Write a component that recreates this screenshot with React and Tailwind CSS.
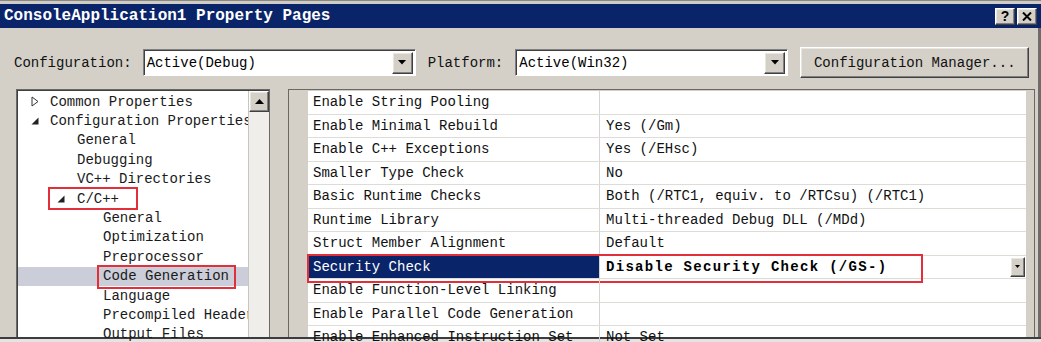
import React from "react";

const raised =
  "bg-[#d4d0c8] border border-t-white border-l-white border-r-[#404040] border-b-[#404040] shadow-[inset_-1px_-1px_0_#808080,inset_1px_1px_0_#e8e6e0] flex items-center justify-center";

function Down() {
  return (
    <svg width="8" height="5" viewBox="0 0 8 5">
      <polygon points="0,0 8,0 4,4.5" fill="#000" />
    </svg>
  );
}

function Combo({ text }) {
  return (
    <div className="h-[27px] w-[273px] bg-white border border-t-[#808080] border-l-[#808080] border-r-white border-b-white shadow-[inset_1px_1px_0_#404040] flex items-center pl-[3px] pr-[2px]">
      <span className="flex-1 text-[14px] leading-none text-black whitespace-pre">{text}</span>
      <div className={`${raised} w-[21px] h-[22px]`}>
        <Down />
      </div>
    </div>
  );
}

function TriOpen() {
  return (
    <svg width="8" height="11" viewBox="0 0 8 11">
      <polygon points="1,1 7,5.5 1,10" fill="none" stroke="#333" strokeWidth="1" />
    </svg>
  );
}

function TriExp() {
  return (
    <svg width="8" height="8" viewBox="0 0 8 8">
      <polygon points="7.5,0.5 7.5,7.5 0.5,7.5" fill="#222" />
    </svg>
  );
}

const tree = [
  { t: "Common Properties", kind: "col" },
  { t: "Configuration Properties", kind: "exp0" },
  { t: "General", kind: "l1" },
  { t: "Debugging", kind: "l1" },
  { t: "VC++ Directories", kind: "l1" },
  { t: "C/C++", kind: "exp1", box: true },
  { t: "General", kind: "l2" },
  { t: "Optimization", kind: "l2" },
  { t: "Preprocessor", kind: "l2" },
  { t: "Code Generation", kind: "l2", sel: true },
  { t: "Language", kind: "l2" },
  { t: "Precompiled Headers", kind: "l2" },
  { t: "Output Files", kind: "l2" },
];

function TreeRow({ r }) {
  let lead;
  if (r.kind === "col")
    lead = (
      <div className="pl-[13px] w-[32px] shrink-0 flex items-center">
        <TriOpen />
      </div>
    );
  else if (r.kind === "exp0")
    lead = (
      <div className="pl-[13px] w-[32px] shrink-0 flex items-center">
        <TriExp />
      </div>
    );
  else if (r.kind === "exp1")
    lead = (
      <div className="pl-[39px] w-[59px] shrink-0 flex items-center">
        <TriExp />
      </div>
    );
  else if (r.kind === "l1") lead = <div className="w-[59px] shrink-0" />;
  else lead = <div className="w-[85px] shrink-0" />;
  return (
    <div
      className={`relative h-[19.4px] flex items-center whitespace-pre text-[14px] leading-none text-[#1a1a1a] ${
        r.sel ? "bg-[#cbcdd8]" : ""
      }`}
    >
      {lead}
      <span>{r.t}</span>
      {r.box && (
        <div className="absolute left-[30px] top-[-2px] w-[90px] h-[23px] border-2 border-[#e2303a]" />
      )}
      {r.sel && (
        <div className="absolute left-[79px] top-[-2px] w-[139px] h-[24px] border-2 border-[#e2303a]" />
      )}
    </div>
  );
}

const props = [
  ["Enable String Pooling", ""],
  ["Enable Minimal Rebuild", "Yes (/Gm)"],
  ["Enable C++ Exceptions", "Yes (/EHsc)"],
  ["Smaller Type Check", "No"],
  ["Basic Runtime Checks", "Both (/RTC1, equiv. to /RTCsu) (/RTC1)"],
  ["Runtime Library", "Multi-threaded Debug DLL (/MDd)"],
  ["Struct Member Alignment", "Default"],
  ["Security Check", "Disable Security Check (/GS-)", true],
  ["Enable Function-Level Linking", ""],
  ["Enable Parallel Code Generation", ""],
  ["Enable Enhanced Instruction Set", "Not Set"],
];

function PropRow({ p }) {
  const sel = p[2];
  return (
    <div className="relative h-[23.5px] flex border-b border-[#dedcd6] text-[14px] leading-none whitespace-pre">
      <div
        className={`w-[292px] shrink-0 flex items-center pl-[5px] border-r border-[#d6d4ce] ${
          sel ? "bg-[#0a246a] text-white" : "text-[#111]"
        }`}
      >
        {p[0]}
      </div>
      <div className="flex-1 flex items-center pl-[6px] pr-[1px] text-[#111]">
        <span className={`flex-1 ${sel ? "font-bold tracking-[1.3px] text-black" : ""}`}>{p[1]}</span>
        {sel && (
          <div className={`${raised} w-[15px] h-[20px]`}>
            <svg width="5" height="3" viewBox="0 0 5 3">
              <polygon points="0,0 5,0 2.5,3" fill="#000" />
            </svg>
          </div>
        )}
      </div>
      {sel && (
        <div className="absolute left-[-1px] top-[-2px] w-[616px] h-[29px] border-2 border-[#e2303a]" />
      )}
    </div>
  );
}

export default function App() {
  return (
    <div
      className={`w-[1041px] h-[342px] overflow-hidden bg-[#d4d0c8] flex flex-col ${"font-['Liberation_Mono','DejaVu_Sans_Mono',monospace]"}`}
    >
      {/* outer frame top */}
      <div className="h-[4px] shrink-0 bg-[#cfccc6] border-t border-[#8a8884]" />
      {/* title bar */}
      <div className="h-[24px] shrink-0 bg-[#0a246a] flex items-center justify-between pl-[4px] pr-[4px]">
        <span className="text-white font-bold text-[16px] leading-none whitespace-pre">
          ConsoleApplication1 Property Pages
        </span>
        <div className="flex gap-[2px]">
          <div className={`${raised} w-[20px] h-[17px]`}>
            <span className="text-[14px] font-bold leading-none text-black font-['Liberation_Sans',sans-serif]">?</span>
          </div>
          <div className={`${raised} w-[20px] h-[17px]`}>
            <svg width="10" height="9" viewBox="0 0 10 9">
              <path d="M1 0.5 L9 8.5 M9 0.5 L1 8.5" stroke="#000" strokeWidth="2" />
            </svg>
          </div>
        </div>
      </div>
      {/* body */}
      <div className="flex-1 flex flex-col border-r-[3px] border-[#6e6c68] min-h-0">
        <div className="pt-[19px] pl-[14px] h-[50px] shrink-0 flex items-start">
          <div className="h-[31px] flex items-center text-[14px] leading-none text-[#111] whitespace-pre">
            <span>Configuration:</span>
            <div className="ml-[11px]">
              <Combo text="Active(Debug)" />
            </div>
            <span className="ml-[12px]">Platform:</span>
            <div className="ml-[12px]">
              <Combo text="Active(Win32)" />
            </div>
            <div className={`${raised} ml-[12px] w-[229px] h-[31px]`}>
              <span className="text-[14px] leading-none text-[#111]">Configuration Manager...</span>
            </div>
          </div>
        </div>
        <div className="pt-[11px] pl-[16px] flex gap-[18px] flex-1 min-h-0">
          {/* tree */}
          <div className="w-[254px] h-[260px] shrink-0 border border-[#6a6864] shadow-[inset_1px_1px_0_#404040] bg-white flex pl-[1px] pt-[1px]">
            <div className="flex-1 pt-[1px] min-w-0 overflow-hidden">
              {tree.map((r, i) => (
                <TreeRow key={i} r={r} />
              ))}
            </div>
            <div className="w-[21px] shrink-0 bg-[#efeeea] border-l border-[#c8c6c0] flex flex-col">
              <div className={`${raised} w-[20px] h-[21px]`}>
                <svg width="9" height="5" viewBox="0 0 9 5">
                  <polygon points="0,5 9,5 4.5,0" fill="#000" />
                </svg>
              </div>
            </div>
          </div>
          {/* property grid */}
          <div className="w-[747px] h-[260px] shrink-0 border border-[#6a6864] bg-[#d4d0c8] flex pt-[1px]">
            <div className="w-[19px] shrink-0 bg-[#d4d0c8]" />
            <div className="w-[718px] shrink-0 bg-white">
              {props.map((p, i) => (
                <PropRow key={i} p={p} />
              ))}
            </div>
          </div>
        </div>
      </div>
      {/* bottom frame */}
      <div className="h-[5px] shrink-0 border-t-2 border-[#3c3c3c] bg-[#e4e4e4]" />
    </div>
  );
}
